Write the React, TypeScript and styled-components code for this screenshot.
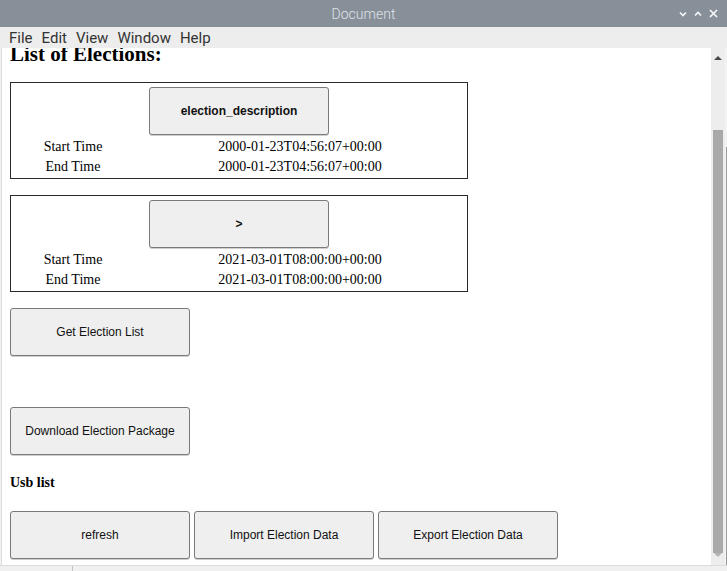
import React, { useLayoutEffect, useRef } from "react";
import styled, { createGlobalStyle } from "styled-components";

const GlobalStyle = createGlobalStyle`
  html, body {
    margin: 0;
    padding: 0;
    background: #ffffff;
  }
  body {
    width: 727px;
    height: 571px;
    overflow: hidden;
  }
`;

const elections = [
  {
    name: "election_description",
    start: "2000-01-23T04:56:07+00:00",
    end: "2000-01-23T04:56:07+00:00",
  },
  {
    name: ">",
    start: "2021-03-01T08:00:00+00:00",
    end: "2021-03-01T08:00:00+00:00",
  },
];

const Window = styled.div`
  width: 727px;
  height: 571px;
  display: flex;
  flex-direction: column;
  background: #f0f0f0;
  overflow: hidden;
`;

const TitleBar = styled.div`
  height: 27px;
  flex: none;
  display: grid;
  grid-template-columns: 1fr auto 1fr;
  align-items: center;
  background: #878f98;
  color: #dfe3e7;
  font-family: Roboto, "Liberation Sans", sans-serif;
  font-size: 14px;
  font-weight: 300;
`;

const Title = styled.div`
  grid-column: 2;
`;

const Controls = styled.div`
  grid-column: 3;
  justify-self: end;
  display: flex;
  align-items: center;
  gap: 7px;
  padding-right: 9px;
  & svg {
    display: block;
  }
`;

const MenuBar = styled.div`
  height: 21px;
  flex: none;
  display: flex;
  align-items: center;
  gap: 9px;
  padding-left: 9px;
  background: #ededed;
  color: #333333;
  font-family: Roboto, "Liberation Sans", sans-serif;
  font-size: 15px;
`;

const Body = styled.div`
  height: 517px;
  flex: none;
  display: flex;
`;

const LeftFrame = styled.div`
  width: 1px;
  background: #f2f2f2;
  border-right: 1px solid #dcdcdc;
`;

const Pane = styled.div`
  flex: 1;
  background: #ffffff;
  overflow-y: scroll;
  scrollbar-width: none;
  &::-webkit-scrollbar {
    display: none;
  }
`;

const Content = styled.div`
  padding: 14px 8px 24px 8px;
  font-family: "Liberation Serif", "Times New Roman", serif;
  color: #000;
`;

const Heading = styled.h2`
  margin: 0 0 16px 0;
  font-size: 21px;
  line-height: 24px;
  font-weight: bold;
`;

const ElectionTable = styled.table`
  width: 458px;
  border: 1px solid #2a2a2a;
  border-spacing: 2px;
  font-size: 14px;
  line-height: 16px;
  margin-bottom: 16px;
  & td {
    padding: 1px;
    text-align: center;
  }
  & td.action {
    padding-top: 2px;
  }
  & td.label {
    width: 118px;
  }
`;

const Button = styled.button<{ $bold?: boolean; $centered?: boolean }>`
  width: 180px;
  height: 48px;
  padding: 0 6px;
  box-sizing: border-box;
  background: #efefef;
  border: 1px solid #7a7a7a;
  border-radius: 3px;
  box-shadow: 0 1px 0 #cfcfcf;
  font-family: "Liberation Sans", Arial, sans-serif;
  font-size: 12px;
  font-weight: ${(p) => (p.$bold ? "bold" : "normal")};
  color: #111;
  display: block;
  margin: ${(p) => (p.$centered ? "0 auto" : "0")};
`;

const Spaced = styled.div<{ $gap: number }>`
  margin-bottom: ${(p) => p.$gap}px;
`;

const SubHeading = styled.div`
  font-size: 14px;
  line-height: 16px;
  font-weight: bold;
  margin-bottom: 20px;
`;

const ButtonRow = styled.div`
  display: flex;
  gap: 4px;
`;

const Scrollbar = styled.div`
  width: 14px;
  display: flex;
  flex-direction: column;
  background: #ededed;
`;

const Arrow = styled.div<{ $dir: "up" | "down"; $enabled?: boolean }>`
  height: 12px;
  flex: none;
  display: flex;
  align-items: ${(p) => (p.$dir === "up" ? "flex-end" : "flex-start")};
  justify-content: center;
  &::before {
    content: "";
    width: 0;
    height: 0;
    border-left: 4px solid transparent;
    border-right: 4px solid transparent;
    ${(p) =>
      p.$dir === "up"
        ? `border-bottom: 4px solid ${p.$enabled ? "#4a4a4a" : "#b4b4b4"};`
        : `border-top: 4px solid ${p.$enabled ? "#4a4a4a" : "#b4b4b4"};`}
  }
`;

const Track = styled.div`
  flex: 1;
  display: flex;
  flex-direction: column;
  align-items: center;
`;

const Thumb = styled.div<{ $offset: number }>`
  width: 10px;
  flex: 1;
  margin-top: ${(p) => p.$offset}px;
  background: #a9a9a9;
`;

const RightFrame = styled.div`
  width: 2px;
  background: linear-gradient(to bottom, #f0f0f0 0 99px, #9a9a9a 99px);
  border-left: 1px solid #f4f4f4;
  box-sizing: border-box;
`;

const BottomFrame = styled.div`
  height: 6px;
  flex: none;
  background: #f0f0f0;
  border-top: 1px solid #dcdcdc;
  box-sizing: border-box;
  padding-left: 72px;
  &::before {
    content: "";
    display: block;
    width: 1px;
    height: 100%;
    background: #c4c4c4;
  }
`;

const Chevron: React.FC<{ up?: boolean }> = ({ up }) => (
  <svg width="8" height="8" viewBox="0 0 8 8">
    <path
      d={up ? "M1 5.5 L4 2.5 L7 5.5" : "M1 2.5 L4 5.5 L7 2.5"}
      fill="none"
      stroke="#f5f7f9"
      strokeWidth="1.7"
    />
  </svg>
);

const Close: React.FC = () => (
  <svg width="9" height="9" viewBox="0 0 9 9">
    <path d="M1 1 L8 8 M8 1 L1 8" stroke="#f5f7f9" strokeWidth="1.7" />
  </svg>
);

export default function App() {
  const paneRef = useRef<HTMLDivElement>(null);

  useLayoutEffect(() => {
    if (paneRef.current) paneRef.current.scrollTop = 20;
  }, []);

  return (
    <>
      <GlobalStyle />
      <Window>
        <TitleBar>
          <Title>Document</Title>
          <Controls>
            <Chevron />
            <Chevron up />
            <Close />
          </Controls>
        </TitleBar>
        <MenuBar>
          <span>File</span>
          <span>Edit</span>
          <span>View</span>
          <span>Window</span>
          <span>Help</span>
        </MenuBar>
        <Body>
          <LeftFrame />
          <Pane ref={paneRef}>
            <Content>
              <Heading>List of Elections:</Heading>
              {elections.map((e) => (
                <ElectionTable key={e.name}>
                  <tbody>
                    <tr>
                      <td className="action" colSpan={2}>
                        <Button $bold $centered>
                          {e.name}
                        </Button>
                      </td>
                    </tr>
                    <tr>
                      <td className="label">Start Time</td>
                      <td>{e.start}</td>
                    </tr>
                    <tr>
                      <td className="label">End Time</td>
                      <td>{e.end}</td>
                    </tr>
                  </tbody>
                </ElectionTable>
              ))}
              <Spaced $gap={51}>
                <Button>Get Election List</Button>
              </Spaced>
              <Spaced $gap={20}>
                <Button>Download Election Package</Button>
              </Spaced>
              <SubHeading>Usb list</SubHeading>
              <ButtonRow>
                <Button>refresh</Button>
                <Button>Import Election Data</Button>
                <Button>Export Election Data</Button>
              </ButtonRow>
            </Content>
          </Pane>
          <Scrollbar>
            <Arrow $dir="up" $enabled />
            <Track>
              <Thumb $offset={70} />
            </Track>
            <Arrow $dir="down" />
          </Scrollbar>
          <RightFrame />
        </Body>
        <BottomFrame />
      </Window>
    </>
  );
}
